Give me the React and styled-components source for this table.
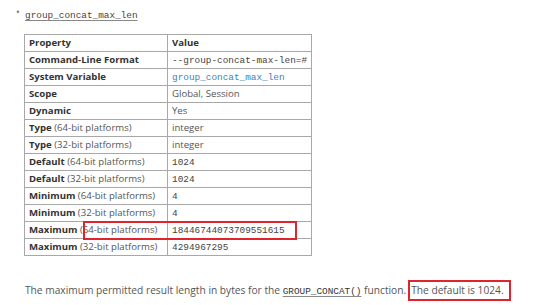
import React from "react";
import styled, { createGlobalStyle } from "styled-components";

const Global = createGlobalStyle`
  body {
    margin: 0;
    background: #fff;
    font-family: "Open Sans", "Liberation Sans", sans-serif;
    color: #555;
  }
`;

const rows = [
  { label: "Command-Line Format", value: "--group-concat-max-len=#", kind: "code" },
  { label: "System Variable", value: "group_concat_max_len", kind: "link" },
  { label: "Scope", value: "Global, Session" },
  { label: "Dynamic", value: "Yes" },
  { label: "Type", note: "(64-bit platforms)", value: "integer" },
  { label: "Type", note: "(32-bit platforms)", value: "integer" },
  { label: "Default", note: "(64-bit platforms)", value: "1024", kind: "code" },
  { label: "Default", note: "(32-bit platforms)", value: "1024", kind: "code" },
  { label: "Minimum", note: "(64-bit platforms)", value: "4", kind: "code" },
  { label: "Minimum", note: "(32-bit platforms)", value: "4", kind: "code" },
  { label: "Maximum", note: "(64-bit platforms)", value: "18446744073709551615", kind: "code" },
  { label: "Maximum", note: "(32-bit platforms)", value: "4294967295", kind: "code" },
];

const Page = styled.div`
  width: 550px;
  height: 305px;
  overflow: hidden;
`;

const List = styled.ul`
  margin: 0;
  padding: 5px 0 0 25px;
  list-style: none;
`;

const Item = styled.li`
  position: relative;
  height: 15px;
  line-height: 15px;
  &:before {
    content: "•";
    position: absolute;
    left: -9px;
    top: 0;
    font-size: 10px;
    line-height: 15px;
    color: #777;
  }
`;

const Code = styled.code`
  font-family: "Liberation Mono", "DejaVu Sans Mono", monospace;
  font-size: 9.4px;
  line-height: 1;
  color: ${(p) => p.color || "#444"};
  text-decoration: ${(p) => (p.underline ? "underline" : "none")};
  text-decoration-color: #888;
  text-underline-offset: 2px;
`;

const TableWrap = styled.div`
  position: relative;
  margin: 14px 0 0 24px;
  width: 287px;
`;

const Table = styled.table`
  width: 287px;
  border-collapse: collapse;
  table-layout: fixed;
  font-size: 9.6px;
  border: 1px solid #a8a8a8;
`;

const Cell = styled.td`
  border: 1px solid #a8a8a8;
  padding: 0 4px;
  color: ${(p) => (p.head ? "#333" : "#555")};
  font-weight: ${(p) => (p.head ? 700 : 400)};
`;

const CellInner = styled.div`
  height: 16px;
  line-height: 16px;
  white-space: nowrap;
  overflow: hidden;
`;

const Label = styled.b`
  font-weight: 700;
  color: #333;
`;

const Mark = styled.div`
  position: absolute;
  left: 59px;
  top: 187px;
  width: 210px;
  height: 15px;
  border: 2px solid #e0232c;
  pointer-events: none;
`;

const Para = styled.p`
  margin: 24px 0 0 25px;
  font-size: 10.2px;
  line-height: 16px;
  color: #555;
  white-space: nowrap;
`;

const Boxed = styled.span`
  display: inline-block;
  line-height: 14px;
  border: 2px solid #e0232c;
  padding: 1px 5px 2px 1px;
  margin-left: 2px;
`;

export default function App() {
  return (
    <Page>
      <Global />
      <List>
        <Item>
          <Code underline>group_concat_max_len</Code>
        </Item>
      </List>
      <TableWrap>
        <Table>
          <colgroup>
            <col style={{ width: 143 }} />
            <col style={{ width: 144 }} />
          </colgroup>
          <thead>
            <tr>
              <Cell head><CellInner>Property</CellInner></Cell>
              <Cell head><CellInner>Value</CellInner></Cell>
            </tr>
          </thead>
          <tbody>
            {rows.map((r, i) => (
              <tr key={i}>
                <Cell>
                  <CellInner>
                    <Label>{r.label}</Label>
                    {r.note ? " " + r.note : null}
                  </CellInner>
                </Cell>
                <Cell>
                  <CellInner>
                    {r.kind === "code" ? (
                      <Code>{r.value}</Code>
                    ) : r.kind === "link" ? (
                      <Code color="#3d83b8">{r.value}</Code>
                    ) : (
                      r.value
                    )}
                  </CellInner>
                </Cell>
              </tr>
            ))}
          </tbody>
        </Table>
        <Mark />
      </TableWrap>
      <Para>
        The maximum permitted result length in bytes for the{" "}
        <Code underline color="#333">GROUP_CONCAT()</Code> function.
        <Boxed>The default is 1024.</Boxed>
      </Para>
    </Page>
  );
}
